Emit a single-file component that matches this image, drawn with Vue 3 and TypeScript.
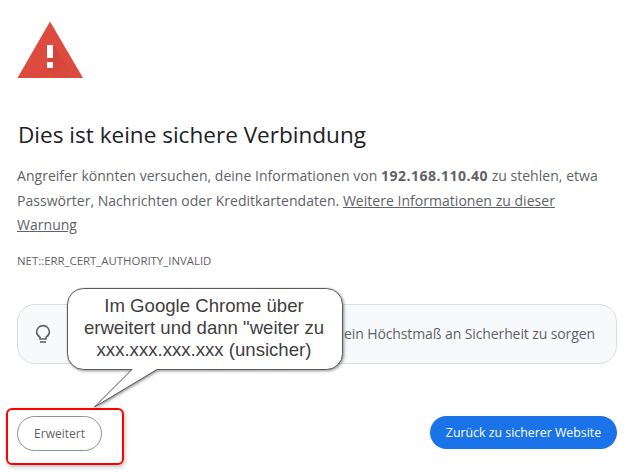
<script setup lang="ts">
const title: string = 'Dies ist keine sichere Verbindung'
</script>

<template>
  <div class="page">
    <svg class="warn" width="66" height="57" viewBox="0 0 66 57" aria-hidden="true">
      <defs>
        <linearGradient id="shade" x1="0" y1="0" x2="1" y2="1">
          <stop offset="0" stop-color="#b5342a" stop-opacity="0.35" />
          <stop offset="1" stop-color="#b5342a" stop-opacity="0" />
        </linearGradient>
      </defs>
      <path d="M33 0.5 66 57H0.5Z" fill="#dd4b3e" />
      <path d="M36.5 24 58 57H37L29 47Z" fill="url(#shade)" />
      <rect x="30" y="24" width="6" height="13" fill="#fff" />
      <rect x="30" y="41" width="6" height="6" fill="#fff" />
    </svg>
    <h1>{{ title }}</h1>
    <p class="body">
      Angreifer könnten versuchen, deine Informationen von <b>192.168.110.40</b> zu stehlen, etwa
      Passwörter, Nachrichten oder Kreditkartendaten. <a>Weitere Informationen zu dieser Warnung</a>
    </p>
    <div class="code">NET::ERR_CERT_AUTHORITY_INVALID</div>
    <div class="tip">
      <svg width="16" height="20" viewBox="0 0 16 20" fill="none" stroke="#5f6368" stroke-width="1.6" aria-hidden="true">
        <path d="M5 13.2C3 12 1.6 10.2 1.6 8A6.4 6.4 0 0 1 14.4 8C14.4 10.2 13 12 11 13.2V15H5Z" />
        <path d="M5 18H11" />
      </svg>
      <span class="tip-text">ein Höchstmaß an Sicherheit zu sorgen</span>
    </div>
    <div class="actions">
      <button class="ghost">Erweitert</button>
      <button class="primary">Zurück zu sicherer Website</button>
    </div>
    <div class="marker"></div>
    <div class="callout">
      <svg class="bubble" width="290" height="130" viewBox="0 0 290 130" aria-hidden="true">
        <path
          d="M17.5 0.5H260.5A16 16 0 0 1 276.5 16.5V65.5A16 16 0 0 1 260.5 81.5H91L28.5 119L66 81.5H17.5A16 16 0 0 1 1.5 65.5V16.5A16 16 0 0 1 17.5 0.5Z"
          fill="#fff" stroke="#5a5a5a" stroke-width="1" />
      </svg>
      <div class="callout-text">Im Google Chrome über<br />erweitert und dann "weiter zu<br />xxx.xxx.xxx.xxx (unsicher)</div>
    </div>
  </div>
</template>

<style>
html, body { margin: 0; background: #fff; }
</style>

<style scoped>
.page {
  position: relative;
  width: 642px;
  height: 473px;
  box-sizing: border-box;
  padding: 21px 25px 0 17px;
  overflow: hidden;
  font-family: "Open Sans", "Noto Sans", sans-serif;
  color: #5f6368;
}
.warn { display: block; }
h1 {
  margin: 41px 0 0 1px;
  font-size: 22.55px;
  line-height: 32px;
  font-weight: 400;
  color: #202124;
}
.body {
  margin: 13px 0 0;
  font-size: 14px;
  line-height: 24.5px;
  letter-spacing: 0.03px;
}
.body b { font-weight: 700; color: #5f6368; letter-spacing: 0.5px; }
.body a { color: #5f6368; text-decoration: underline; }
.code {
  margin-top: 13px;
  font-size: 11.4px;
  line-height: 20px;
}
.tip {
  margin-top: 33px;
  height: 60px;
  box-sizing: border-box;
  border: 1px solid #dadce0;
  border-radius: 18px;
  background: #f8f9fa;
  display: flex;
  align-items: center;
  justify-content: space-between;
  padding: 0 21px 0 17px;
  font-size: 14px;
  letter-spacing: -0.1px;
}
.actions {
  margin-top: 52px;
  display: flex;
  justify-content: space-between;
  align-items: flex-start;
}
button {
  font-family: inherit;
  border-radius: 18px;
  padding: 0;
}
.ghost {
  width: 85px;
  height: 35px;
  font-size: 12px;
  background: #fff;
  border: 1px solid #8f9296;
  color: #5f6368;
}
.primary {
  width: 187px;
  height: 33px;
  font-size: 12.35px;
  background: #1a73e8;
  border: 0;
  color: #fff;
}
.marker {
  position: absolute;
  left: 6px;
  top: 408px;
  width: 118px;
  height: 57px;
  box-sizing: border-box;
  border: 2px solid #f00;
  border-radius: 6px;
  box-shadow: 1px 2px 4px rgba(0, 0, 0, 0.25);
}
.callout {
  position: absolute;
  left: 66px;
  top: 288px;
  width: 290px;
  height: 130px;
}
.bubble {
  position: absolute;
  left: 0;
  top: 0;
  filter: drop-shadow(1px 1px 1.5px rgba(0, 0, 0, 0.45));
}
.callout-text {
  position: absolute;
  left: 0;
  top: 7px;
  width: 276px;
  text-align: center;
  font-family: "Liberation Sans", Arial, sans-serif;
  font-size: 18.6px;
  line-height: 22px;
  color: #404040;
}
</style>
